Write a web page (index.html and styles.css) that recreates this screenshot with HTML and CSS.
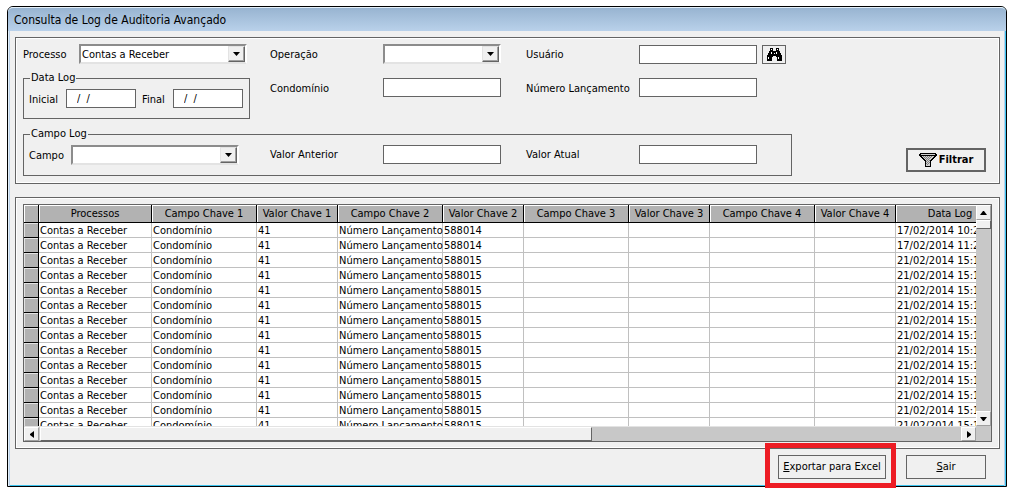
FILE: index.html
```html
<!DOCTYPE html>
<html lang="pt-BR">
<head>
<meta charset="utf-8">
<title>Consulta de Log de Auditoria Avançado</title>
<link rel="stylesheet" href="styles.css">
</head>
<body>
<main class="window">
  <h1 class="titlebar">Consulta de Log de Auditoria Avançado</h1>
  <div class="content">
    <form class="panel filters">
      <div class="filters-top">
        <div class="stack">
          <div class="line">
            <label class="w-processo" for="processo">Processo</label>
            <span class="combo"><select id="processo"><option>Contas a Receber</option></select><span class="arrow"></span></span>
          </div>
          <fieldset class="group dates">
            <legend>Data Log</legend>
            <div class="line">
              <label class="w-inicial" for="inicial">Inicial</label><input class="date" id="inicial" value="/  /">
              <label class="w-final" for="final">Final</label><input class="date" id="final" value="/  /">
            </div>
          </fieldset>
        </div>
        <div class="fields">
          <label for="operacao">Operação</label>
          <span class="combo"><select id="operacao"><option></option></select><span class="arrow"></span></span>
          <label for="usuario">Usuário</label>
          <input id="usuario">
          <button class="btn search" type="button" aria-label="Procurar usuário">
            <svg width="15" height="13" viewBox="0 0 15 13" shape-rendering="crispEdges">
              <path d="M3 0h3v3h3V0h3v3h1v2h1v2h1v6h-5V9H9V8H6v1H5v4H0V7h1V5h1V3h1z"/>
              <path fill="#fff" d="M4 1h1v1H4zM10 1h1v1h-1zM4 4h1v2H4zM9 4h1v2H9zM7 5h1v1H7zM1 9h1v2H1zM11 9h1v2h-1z"/>
            </svg>
          </button>
          <label for="condominio">Condomínio</label>
          <input id="condominio">
          <label for="lancamento">Número Lançamento</label>
          <input id="lancamento">
        </div>
      </div>
      <div class="filters-bottom">
        <fieldset class="group campo-log">
          <legend>Campo Log</legend>
          <div class="line">
            <div class="campo line">
              <label class="w-campo" for="campo">Campo</label>
              <span class="combo"><select id="campo"><option></option></select><span class="arrow"></span></span>
            </div>
            <div class="fields">
              <label for="anterior">Valor Anterior</label><input id="anterior">
              <label for="atual">Valor Atual</label><input id="atual">
            </div>
          </div>
        </fieldset>
        <button class="btn filter" type="button">
          <svg width="18" height="14" viewBox="0 0 18 14" shape-rendering="crispEdges">
            <path d="M1 0h16v1h1v2h-1v1h-1v1h-1v1h-1v1h-1v1h-1v6H6V8H5V7H4V6H3V5H2V4H1V3H0V1h1z"/>
            <path fill="#d0d0d0" d="M2 1h14v1H2zM3 3h12v1h-1v1h-1v1h-1v1h-1v6H7V7H6V6H5V5H4V4H3z"/>
            <path fill="#808080" d="M4 3h1v1H4zM6 3h1v1H6zM8 3h1v1H8zM10 3h1v1h-1zM12 3h1v1h-1zM5 4h1v1H5zM7 4h1v1H7zM9 4h1v1H9zM11 4h1v1h-1zM6 5h1v1H6zM8 5h1v1H8zM10 5h1v1h-1zM7 6h1v1H7zM9 6h1v1H9zM8 7h1v1H8zM10 7h1v1h-1zM7 8h1v1H7zM9 8h1v1H9zM8 9h1v1H8zM10 9h1v1h-1zM7 10h1v1H7zM9 10h1v1H9zM8 11h1v1H8z"/>
          </svg>
          <span>Filtrar</span>
        </button>
      </div>
    </form>
    <section class="panel results">
      <div class="datagrid">
        <div class="viewport">
          <table>
            <colgroup><col class="c-sel"><col class="c-proc"><col class="c-campo"><col class="c-valor"><col class="c-campo"><col class="c-valor"><col class="c-campo"><col class="c-valor"><col class="c-campo"><col class="c-valor"><col class="c-data"></colgroup>
            <thead><tr><th></th><th>Processos</th><th>Campo Chave 1</th><th>Valor Chave 1</th><th>Campo Chave 2</th><th>Valor Chave 2</th><th>Campo Chave 3</th><th>Valor Chave 3</th><th>Campo Chave 4</th><th>Valor Chave 4</th><th>Data Log</th></tr></thead>
            <tbody>
              <tr><th></th><td>Contas a Receber</td><td>Condomínio</td><td>41</td><td>Número Lançamento</td><td>588014</td><td></td><td></td><td></td><td></td><td>17/02/2014 10:2</td></tr>
              <tr><th></th><td>Contas a Receber</td><td>Condomínio</td><td>41</td><td>Número Lançamento</td><td>588014</td><td></td><td></td><td></td><td></td><td>17/02/2014 11:2</td></tr>
              <tr><th></th><td>Contas a Receber</td><td>Condomínio</td><td>41</td><td>Número Lançamento</td><td>588015</td><td></td><td></td><td></td><td></td><td>21/02/2014 15:1</td></tr>
              <tr><th></th><td>Contas a Receber</td><td>Condomínio</td><td>41</td><td>Número Lançamento</td><td>588015</td><td></td><td></td><td></td><td></td><td>21/02/2014 15:1</td></tr>
              <tr><th></th><td>Contas a Receber</td><td>Condomínio</td><td>41</td><td>Número Lançamento</td><td>588015</td><td></td><td></td><td></td><td></td><td>21/02/2014 15:1</td></tr>
              <tr><th></th><td>Contas a Receber</td><td>Condomínio</td><td>41</td><td>Número Lançamento</td><td>588015</td><td></td><td></td><td></td><td></td><td>21/02/2014 15:1</td></tr>
              <tr><th></th><td>Contas a Receber</td><td>Condomínio</td><td>41</td><td>Número Lançamento</td><td>588015</td><td></td><td></td><td></td><td></td><td>21/02/2014 15:1</td></tr>
              <tr><th></th><td>Contas a Receber</td><td>Condomínio</td><td>41</td><td>Número Lançamento</td><td>588015</td><td></td><td></td><td></td><td></td><td>21/02/2014 15:1</td></tr>
              <tr><th></th><td>Contas a Receber</td><td>Condomínio</td><td>41</td><td>Número Lançamento</td><td>588015</td><td></td><td></td><td></td><td></td><td>21/02/2014 15:1</td></tr>
              <tr><th></th><td>Contas a Receber</td><td>Condomínio</td><td>41</td><td>Número Lançamento</td><td>588015</td><td></td><td></td><td></td><td></td><td>21/02/2014 15:1</td></tr>
              <tr><th></th><td>Contas a Receber</td><td>Condomínio</td><td>41</td><td>Número Lançamento</td><td>588015</td><td></td><td></td><td></td><td></td><td>21/02/2014 15:1</td></tr>
              <tr><th></th><td>Contas a Receber</td><td>Condomínio</td><td>41</td><td>Número Lançamento</td><td>588015</td><td></td><td></td><td></td><td></td><td>21/02/2014 15:1</td></tr>
              <tr><th></th><td>Contas a Receber</td><td>Condomínio</td><td>41</td><td>Número Lançamento</td><td>588015</td><td></td><td></td><td></td><td></td><td>21/02/2014 15:1</td></tr>
              <tr><th></th><td>Contas a Receber</td><td>Condomínio</td><td>41</td><td>Número Lançamento</td><td>588015</td><td></td><td></td><td></td><td></td><td>21/02/2014 15:1</td></tr>
            </tbody>
          </table>
        </div>
        <div class="vbar">
          <button class="step" type="button" aria-label="Rolar para cima"><svg width="7" height="4" viewBox="0 0 7 4"><path d="M0 4h7L4 0H3z"/></svg></button>
          <div class="thumb"></div>
          <button class="step last" type="button" aria-label="Rolar para baixo"><svg width="7" height="4" viewBox="0 0 7 4"><path d="M0 0h7L4 4H3z"/></svg></button>
        </div>
        <div class="hbar">
          <button class="step" type="button" aria-label="Rolar para a esquerda"><svg width="4" height="7" viewBox="0 0 4 7"><path d="M4 0v7L0 4V3z"/></svg></button>
          <div class="thumb"></div>
          <button class="step last" type="button" aria-label="Rolar para a direita"><svg width="4" height="7" viewBox="0 0 4 7"><path d="M0 0v7l4-3V3z"/></svg></button>
        </div>
        <div class="corner"></div>
      </div>
    </section>
    <div class="actions">
      <button class="btn export" type="button"><span><u>E</u>xportar para Excel</span></button>
      <button class="btn exit" type="button"><span><u>S</u>air</span></button>
    </div>
  </div>
</main>
</body>
</html>
```
FILE: styles.css
```css
* { box-sizing: border-box; }

body {
  margin: 0;
  height: 100vh;
  padding: 6px 6px 5px 7px;
  display: flex;
  background: #fff;
  color: #000;
  font: 11px/14px Tahoma, "DejaVu Sans Condensed", sans-serif;
}

input, select, button { font: inherit; color: inherit; margin: 0; border-radius: 0; }

.window {
  flex: 1;
  min-width: 0;
  display: flex;
  flex-direction: column;
  border: 1px solid #000;
  border-radius: 6px 6px 0 0;
  background: #f0f0f0;
  box-shadow: inset 1px 0 #e4f0fa, inset 2px 0 #b9d1ea, inset -1px 0 #3cc3ee, inset -2px 0 #b9d1ea, inset 0 -1px #3cc3ee;
}

.titlebar {
  margin: 0;
  height: 24px;
  padding: 0 6px;
  border-top: 1px solid #e4f0fa;
  border-radius: 5px 5px 0 0;
  background: linear-gradient(#98b4d1, #b9d1ea);
  font-size: 12px;
  font-weight: normal;
  line-height: 24px;
}

.content {
  flex: 1;
  min-height: 0;
  display: flex;
  flex-direction: column;
  padding: 6px 6px 7px 7px;
}

.panel { border: 1px solid #646464; box-shadow: inset 0 0 0 1px #fff; }

.filters { height: 147px; padding: 6px 13px 7px 7px; display: flex; flex-direction: column; justify-content: space-between; }
.filters-top, .filters-bottom, .line { display: flex; }
.line { align-items: center; }
.stack { width: 247px; }
.stack > .line { height: 20px; }

label { padding-top: 2px; }

.fields {
  display: grid;
  grid-template-columns: 113px 118px 138px 118px 29px;
  row-gap: 14px;
  align-items: center;
  align-content: start;
}
.fields > label:nth-of-type(even) { padding-left: 25px; }

input { width: 118px; height: 19px; padding: 0 3px; border: 1px solid #646464; background: #fff; }
.date { width: 70px; padding-left: 10px; white-space: pre; }
.w-processo { width: 56px; }
.w-inicial { width: 37px; }
.w-final { width: 37px; padding-left: 6px; }
.w-campo { width: 42px; }

.combo {
  position: relative;
  display: block;
  width: 168px;
  height: 20px;
  border: 2px solid #646464;
  border-color: #8c8c8c #fff #e3e3e3 #8c8c8c;
  background: #fff;
}
.fields .combo { width: 118px; }
.combo select { display: block; width: 100%; height: 16px; padding: 1px 18px 0 1px; border: 0; appearance: none; background: #fff; }
.combo .arrow {
  position: absolute;
  inset: 0 0 0 auto;
  width: 17px;
  pointer-events: none;
  border: 1px solid;
  border-color: #e3e3e3 #646464 #646464 #e3e3e3;
  box-shadow: inset -1px -1px #a0a0a0;
  background: #f0f0f0;
}
.combo .arrow::after { content: ""; display: block; margin: 5px auto 0 4px; width: 7px; height: 4px; background: #000; clip-path: polygon(0 0, 100% 0, 50% 100%); }

.group { min-width: 0; margin: 0; padding: 0 5px; border: 1px solid #646464; }
.group legend { margin-left: 1px; padding: 0 1px; line-height: 14px; }
.dates { width: 227px; height: 48px; margin-top: 7px; }
.dates .line { padding-top: 4px; }

.campo-log { width: 769px; height: 49px; }
.campo-log > .line { padding-top: 2px; }
.campo { width: 241px; padding-top: 2px; }
.campo-log .fields { grid-template-columns: 113px 118px 138px 118px; }

.btn { padding: 0; border: 1px solid #646464; background: #f0f0f0; display: flex; align-items: center; justify-content: center; }
.search { width: 24px; height: 19px; margin-left: 5px; }
.filter { width: 80px; height: 24px; margin: auto 0 4px auto; gap: 2px; border-width: 2px; font-weight: bold; }

.results { flex: 1; min-height: 0; margin-top: 13px; padding: 6px 7px; display: flex; }

.datagrid {
  flex: 1;
  min-width: 0;
  display: grid;
  grid-template: minmax(0, 1fr) 15px / minmax(0, 1fr) 15px;
  border: 1px solid #646464;
  background: #fff;
}
.viewport { overflow: hidden; }

table { width: 981px; table-layout: fixed; border-collapse: separate; border-spacing: 0; }
.c-sel { width: 15px; }
.c-proc { width: 113px; }
.c-campo { width: 105px; }
.c-valor { width: 81px; }
.c-data { width: 109px; }
th, td { white-space: nowrap; font-weight: normal; }
thead th { height: 18px; padding: 1px 0 0; border-right: 1px solid #000; border-bottom: 1px solid #000; background: #b2b2b2; box-shadow: inset 1px 1px #fff; line-height: 16px; }
tbody th { height: 15px; padding: 0; border-right: 1px solid #000; border-bottom: 1px solid #000; background: #b2b2b2; box-shadow: inset 1px 1px #e3e3e3; }
td { height: 15px; padding: 2px 0 0 1px; border-right: 1px solid #c0c0c0; border-bottom: 1px solid #c0c0c0; line-height: 12px; }

.vbar, .hbar { display: flex; background: #c8c8c8; }
.vbar { flex-direction: column; }
.hbar { border-top: 1px solid #e3e3e3; }
.corner { background: #c8c8c8; }
.step {
  width: 15px;
  height: 15px;
  flex: none;
  display: flex;
  align-items: center;
  justify-content: center;
  padding: 0;
  border: 1px solid;
  border-color: #fff #a0a0a0 #a0a0a0 #fff;
  background: #f0f0f0;
}
.hbar .step { height: 14px; }
.step.last { margin-top: auto; }
.hbar .step.last { margin: 0 0 0 auto; }
.thumb { border: 1px solid; border-color: #fff #646464 #646464 #fff; background: #f0f0f0; }
.vbar .thumb { height: 9px; }
.hbar .thumb { width: 58%; margin-left: 1px; }

.actions { display: flex; justify-content: flex-end; gap: 20px; padding: 6px 14px 0 0; }
.actions .btn { height: 24px; }
.export { position: relative; width: 108px; }
.export::after { content: ""; position: absolute; inset: -13px -11px -10px -14px; border: 5px solid #ed1c24; pointer-events: none; }
.exit { width: 80px; }
```
